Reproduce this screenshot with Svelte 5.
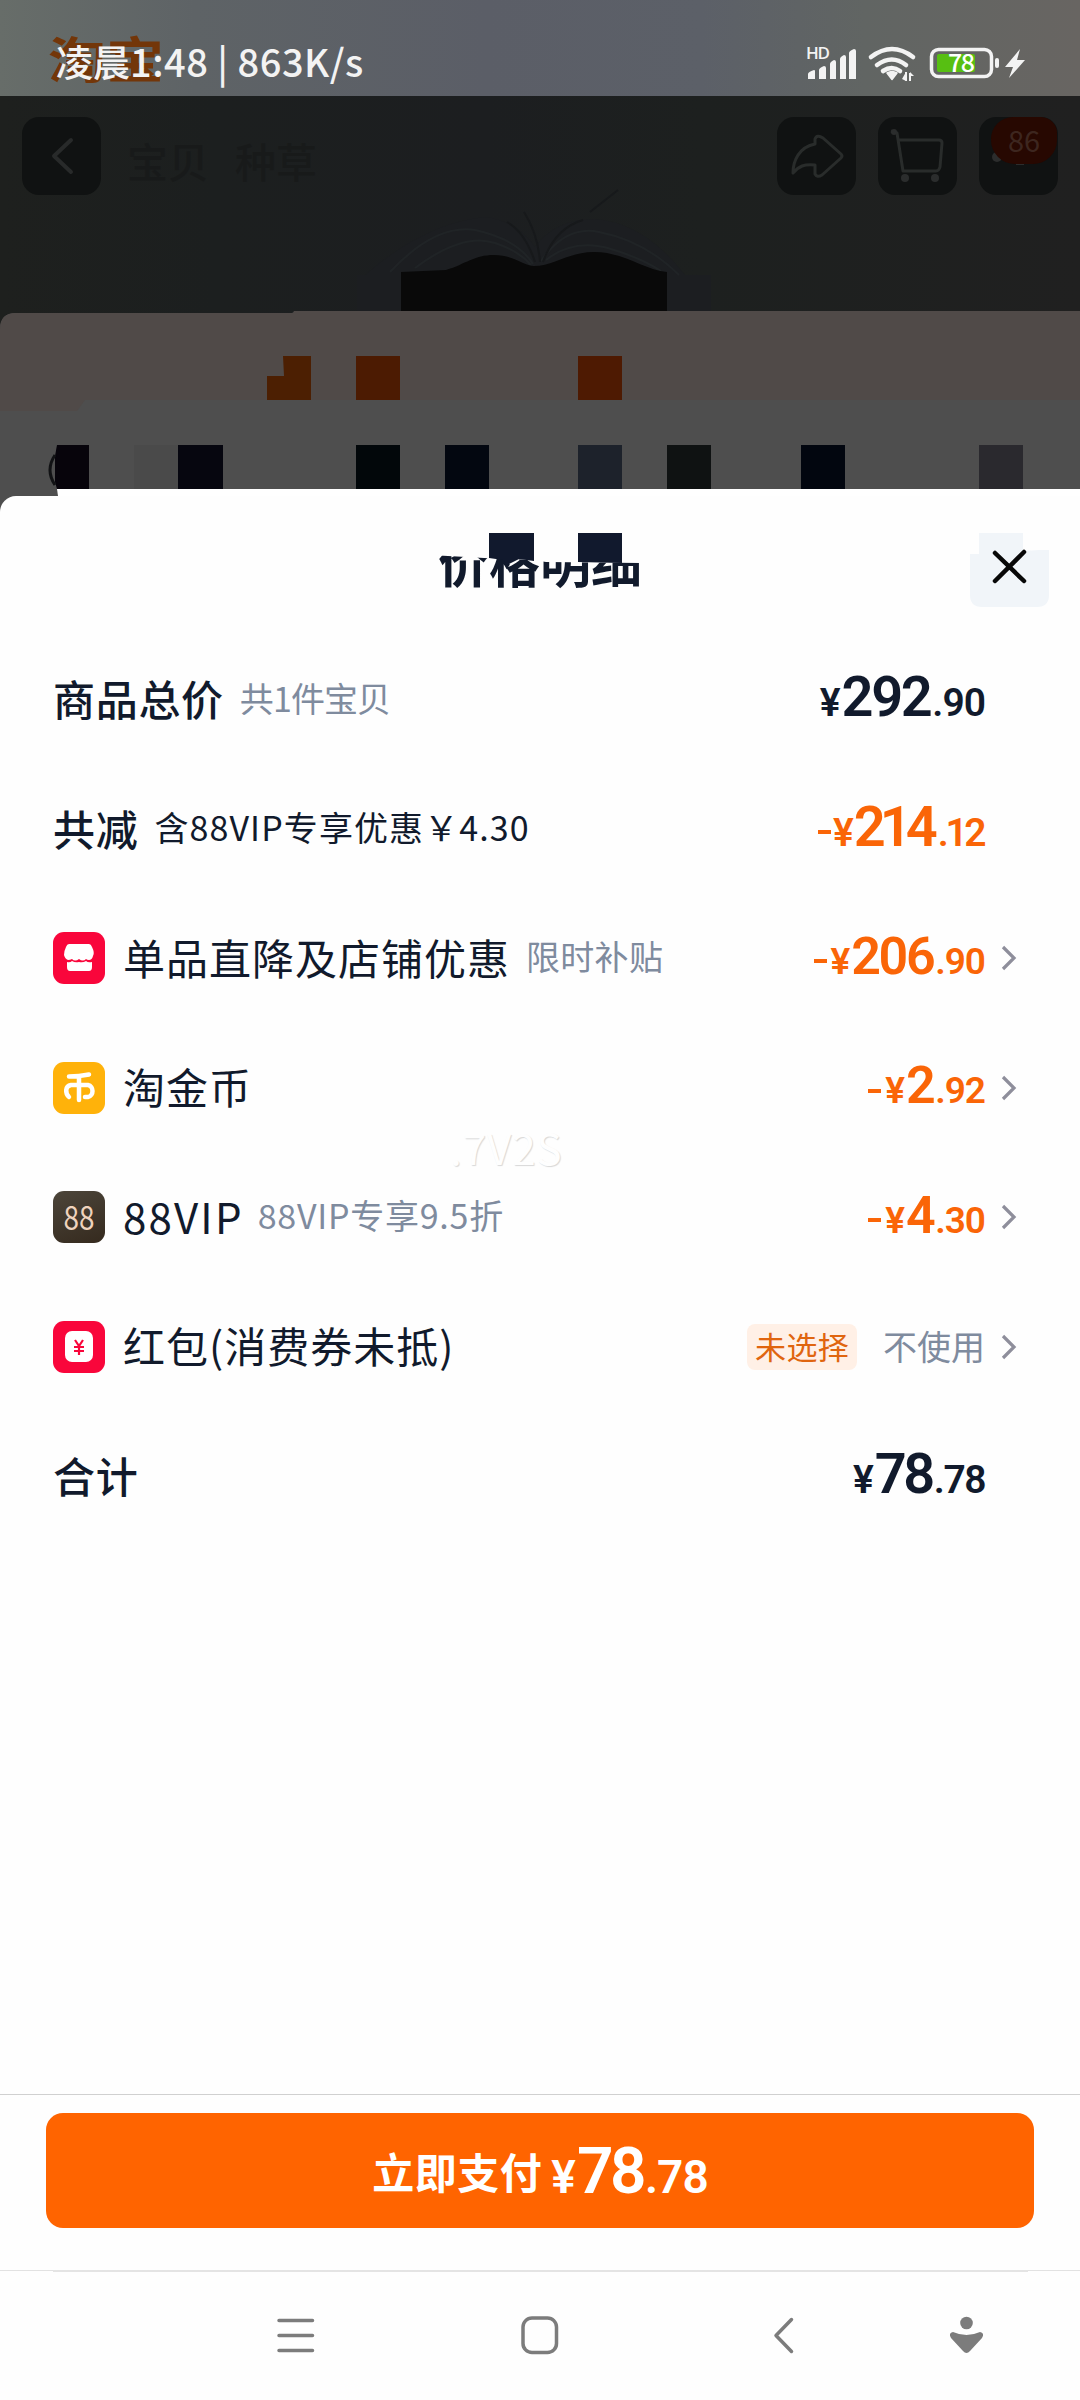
<script>
  const rows = [
    { label: "商品总价", strong: true, note: "共1件宝贝", noteGap: -0.9, sign: "", int: "292", dec: ".90", size: "big" },
    { label: "共减", strong: true, note: "含88VIP专享优惠￥4.30", noteGap: 1.1, darkNote: true, sign: "-", int: "214", dec: ".12", size: "big", tight: true, orange: true },
    { icon: "shop", label: "单品直降及店铺优惠", note: "限时补贴", noteGap: 0.3, sign: "-", int: "206", dec: ".90", orange: true, arrow: true },
    { icon: "coin", label: "淘金币", sign: "-", int: "2", dec: ".92", orange: true, arrow: true },
    { icon: "vip", label: "88VIP", latin: true, note: "88VIP专享9.5折", noteGap: 0.75, sign: "-", int: "4", dec: ".30", orange: true, arrow: true },
    { icon: "packet", label: "红包(消费券未抵)", tag: "未选择", value: "不使用", arrow: true },
    { label: "合计", strong: true, sign: "", int: "78", dec: ".78", size: "big", narrow: true },
  ];

  // leftover blocks of the page behind the sheet: x, y, width, colour
  const blocks = [
    [356, 356, 44, "#4c1b02"],
    [578, 356, 44, "#4e1a02"],
    [134, 445, 44, "#4a4a4a"],
    [178, 445, 45, "#06060f"],
    [356, 445, 44, "#02070a"],
    [445, 445, 44, "#030710"],
    [578, 445, 44, "#1d222b"],
    [667, 445, 44, "#0f1212"],
    [801, 445, 44, "#02060f"],
    [979, 445, 44, "#2a292e"],
  ];
</script>

<div class="screen">
  <header class="status">
    <span class="brand">淘宝</span>
    <span class="time">凌晨<b>1:48&nbsp;|&nbsp;863K/s</b></span>
    <svg class="status-icons" width="222" height="40" viewBox="805 44 222 40">
      <text x="806" y="59" class="hd" textLength="24">HD</text>
      <g fill="#f3f3f3">
        <path d="M808 79v-5q0-2 6-4q1 0 1 1v8zM819 79v-9q0-2 5-4q2 0 2 2v11zM830 79v-15q0-2 4-4q2 0 2 2v17zM840 79v-20q0-2 4-4q2 0 2 2v22zM849 79v-26q0-2 5-4q2 0 2 2v28z" />
        <path d="M887 73q5-3 10 0l-5 6.500z" stroke="#f3f3f3" stroke-width="1.500" stroke-linejoin="round" />
        <path d="M902 79l4-7v9zM905 72h2v9h-2zM909 73h2v8h-2zM910 72l4 4h-4z" />
        <rect x="995" y="58" width="4" height="10" rx="2" />
        <path d="M1020 49l-15 18h8l-4 11 16-18h-8z" />
      </g>
      <g fill="none" stroke="#f3f3f3" stroke-width="4.600" stroke-linecap="round">
        <path d="M871 57q21-16 42 0M877 65q15-11 29 0M883 71q9-6 17 0" />
      </g>
      <rect x="931.500" y="49.500" width="60" height="27" rx="7" fill="none" stroke="#f3f3f3" stroke-width="3.500" />
      <rect x="937" y="54" width="38" height="18" rx="2" fill="#57bf12" />
      <text x="948" y="72" class="charge" textLength="27">78</text>
    </svg>
  </header>

  <div class="behind">
    <svg class="backdrop" width="1080" height="400" viewBox="0 96 1080 400">
      <g fill="#1c1e21">
        <rect x="357" y="275" width="44" height="38" />
        <rect x="667" y="275" width="44" height="38" />
        <path d="M365 275q60-52 120-58q32 4 50 30q20-28 60-28q50 4 90 56v8H365z" />
      </g>
      <g fill="none" stroke="#222528" stroke-width="2" opacity=".8">
        <path d="M390 272q45-48 85-42q42 9 58 34M415 268q48-36 80-25q24 8 36 22M541 261q25-36 58-29q46 9 80 43M546 260q28-22 65-11q30 9 50 22" />
      </g>
      <path d="M535 262q-10-30-28-40M540 262q-2-28-16-50M543 262q12-34 40-42M590 212l28-22" fill="none" stroke="#17191b" stroke-width="2" />
      <path d="M401 272l45-2c20-6 28-15 48-15c20 0 30 11 40 11c20 0 34-14 60-14c30 0 50 18 73 20v40H401z" fill="#090909" />
      <path d="M0 329q0-16 16-16h276q2 0 2-2h786v185H0z" fill="#4e4e4e" />
      <path d="M0 329q0-16 16-16h276q2 0 2-2h786v89H85l-8 11H0z" fill="#504a48" />
      <path d="M283 356h28v44h-44v-24h17z" fill="#4c1f02" />
      {#each blocks as [x, y, w, fill]}
        <rect {x} {y} width={w} height="44" {fill} />
      {/each}
      <path d="M57 445h32v44H57l-2-7v-26z" fill="#07040b" />
      <path d="M55 455q-10 15 0 30" fill="none" stroke="#111214" stroke-width="3" />
      <path d="M58 496l-1-7h1023v7z" fill="#fff" />
    </svg>
    <div class="toolbar">
      <span class="tile">
        <svg width="79" height="78" viewBox="22 117 79 78"><path d="M71 140l-17 16 17 16" fill="none" stroke="#282a2a" stroke-width="4" stroke-linecap="round" stroke-linejoin="round" /></svg>
      </span>
      <span class="tab">宝贝</span>
      <span class="tab">种草</span>
      <span class="tile push">
        <svg width="79" height="78" viewBox="777 117 79 78"><path d="M793 173c0-12 6-26 22-29v-5q2-5 8-1l18 16q2 2 0 4l-19 17q-5 3-7-1v-9c-11-1-16 1-22 8z" fill="none" stroke="#292c2b" stroke-width="3" stroke-linejoin="round" /></svg>
      </span>
      <span class="tile">
        <svg width="79" height="78" viewBox="878 117 79 78"><g fill="none" stroke="#292c2b" stroke-width="3" stroke-linejoin="round"><path d="M891 131l6 2 6 38h33q3 0 4-4l2-24q0-3-3-3h-40" /></g><g fill="#2b2d2d"><circle cx="905" cy="178" r="4" /><circle cx="935" cy="178" r="4" /><circle cx="894" cy="132" r="3" /></g></svg>
      </span>
      <span class="tile">
        <svg width="79" height="78" viewBox="979 117 79 78"><circle cx="997" cy="157" r="5" fill="#2c2d2d" /><path d="M1016 164h8" stroke="#2c2d2d" stroke-width="2" /></svg>
        <em class="count">86</em>
      </span>
    </div>
  </div>

  <section class="sheet">
    <div class="title">
      <h1>价格明细</h1>
      <svg class="title-cover" width="240" height="50" viewBox="430 518 240 50">
        <path d="M430 518h240v46l-30-1-94-1-12-2-50-2-54-3z" fill="#fefefe" />
        <path d="M489 533h45v28l-15-2-12 6-4-5-14-2zM578 533h44v30l-44-1z" fill="#11192d" />
      </svg>
      <svg class="close" width="79" height="74" viewBox="970 533 79 74">
        <path d="M979 533h44v18l16-1h10v45q0 12-12 12h-55q-12 0-12-12v-41h9z" fill="#f1f5f9" />
        <path d="M995 553l29 28M1024 552l-29 29" stroke="#080808" stroke-width="4.500" stroke-linecap="round" />
      </svg>
    </div>

    <div class="list">
      {#each rows as row}
        <div class="row">
          {#if row.icon}
            <span class="icon {row.icon}">
              {#if row.icon === "shop"}
                <svg width="52" height="52" viewBox="0 0 52 52"><path d="M16 12h20q2 0 3 3q3 6 1 9q-1 4-4 4q-2 0-3-1q-3 3-7 0q-4 3-7 0q-2 1-4 1q-3-1-4-5q0-4 2-8q1-3 3-3z" fill="#fff" /><path d="M14 30q3 1 5-1q3 2 7 1q4 1 7-1q2 2 6 1v5q0 4-3 4H17q-3 0-3-4z" fill="#fff" /></svg>
              {:else if row.icon === "coin"}
                <svg width="52" height="52" viewBox="0 0 52 52"><g fill="none" stroke="#fff" stroke-width="4.500" stroke-linecap="round" stroke-linejoin="round"><path d="M16 14.500q10 0 20-2M26 14v24M16 35c-4-4-4-11 2-12h17c6 1 6 11 0 12h-3" /></g></svg>
              {:else if row.icon === "vip"}
                <span class="eights">88</span>
              {:else}
                <svg width="52" height="52" viewBox="0 0 52 52"><rect x="12" y="10" width="28" height="31" rx="7" fill="#fff" /><path d="M22 19l4 6 4-6M21 26h10M21 30h10M26 25v9" fill="none" stroke="#f9063b" stroke-width="2.200" /></svg>
              {/if}
            </span>
          {/if}
          <span class="label" class:strong={row.strong} class:latin={row.latin}>{row.label}</span>
          {#if row.note}
            <span class="note" class:dark={row.darkNote} style="letter-spacing: {row.noteGap}px">{row.note}</span>
          {/if}
          <div class="right">
            {#if row.tag}
              <span class="tag">{row.tag}</span>
              <span class="value">{row.value}</span>
            {:else}
              <span class="price" class:big={row.size === "big"} class:orange={row.orange} class:tight={row.tight} class:narrow={row.narrow}>
                {#if row.sign}<i class="minus"></i>{/if}<small>¥</small><strong>{row.int}</strong><small class="dec">{row.dec}</small>
              </span>
            {/if}
          </div>
          <span class="arrow">
            {#if row.arrow}
              <svg width="18" height="28" viewBox="0 0 18 28"><path d="M3 3l11 11L3 25" fill="none" stroke="#8e8e9b" stroke-width="3.200" /></svg>
            {/if}
          </span>
        </div>
      {/each}
      <span class="ghost">.7V2S</span>
    </div>
  </section>

  <footer class="pay">
    <button>
      <span>立即支付</span>
      <span class="price paid"><small>¥</small><strong>78</strong><small class="dec">.78</small></span>
    </button>
  </footer>

  <nav>
    <svg width="1080" height="130" viewBox="0 2270 1080 130">
      <path d="M0 2270.500h1080" stroke="#e2e2e2" />
      <path d="M53 2271h975" stroke="#e4e4e4" stroke-width="2" />
      <g fill="none" stroke="#7c7c7c" stroke-width="3.500" stroke-linecap="round" stroke-linejoin="round">
        <path d="M279 2320.500h33.500M279 2335.500h33.500M279 2350.500h33.500" />
        <rect x="523" y="2318" width="33.500" height="34.500" rx="9" />
        <path d="M791.500 2319.500l-15.500 16 15.500 16" />
      </g>
      <circle cx="966.500" cy="2323" r="6.300" fill="#7c7c7c" />
      <path d="M953 2332q13.500 6 27 0q5 1 2 6l-12 13q-3.500 4-7 0l-12-13q-3-5 2-6z" fill="#7c7c7c" />
    </svg>
  </nav>
</div>

<style>
  :global(body) {
    margin: 0;
    background: #fefefe;
  }
  .screen {
    width: 1080px;
    height: 2400px;
    display: flex;
    flex-direction: column;
    overflow: hidden;
    color: #111a2c;
    background: #4e4e4e;
    font-family: "Noto Sans CJK SC", sans-serif;
  }
  svg {
    display: block;
  }
  .status {
    position: relative;
    box-sizing: border-box;
    height: 96px;
    padding: 14px 53px 0 56px;
    display: flex;
    align-items: center;
    justify-content: space-between;
    background: linear-gradient(90deg, #676d69 0, #5e6366 18%, #5b5e67 45%, #5c6068 65%, #616563 80%, #686562 100%);
  }
  .brand {
    position: absolute;
    left: 48px;
    top: 30px;
    font-size: 58px;
    line-height: 54px;
    font-weight: 700;
    color: #733609;
    transform: scaleY(0.85);
  }
  .time {
    position: relative;
    top: 6px;
    font-size: 37px;
    line-height: 50px;
    font-weight: 500;
    color: #f3f3f3;
    white-space: nowrap;
  }
  .time b {
    font-size: 38px;
    font-weight: 500;
    letter-spacing: 0.5px;
  }
  .status-icons {
    margin-top: 18px;
    overflow: visible;
  }
  .hd {
    font: 600 17px "Open Sans", sans-serif;
    fill: #f3f3f3;
  }
  .charge {
    font: 500 25px "Noto Sans CJK SC", sans-serif;
    fill: #fff;
  }
  .behind {
    position: relative;
    height: 400px;
    background: linear-gradient(90deg, #1e201e 0, #1c1f1f 20%, #1c1e20 45%, #1d201f 65%, #202020 100%);
  }
  .backdrop {
    position: absolute;
    left: 0;
    top: 0;
  }
  .toolbar {
    position: relative;
    display: flex;
    gap: 22px;
    padding: 21px 22px 0;
  }
  .tile {
    position: relative;
    width: 79px;
    height: 78px;
    border-radius: 17px;
    background: #101212;
    overflow: hidden;
  }
  .push {
    margin-left: auto;
  }
  .tab {
    margin: 10px 0 0 4px;
    font-size: 41px;
    line-height: 66px;
    font-weight: 500;
    color: #181a1a;
  }
  .count {
    position: absolute;
    top: 0;
    left: 12px;
    width: 66px;
    height: 47px;
    border-radius: 22px 16px 24px 24px;
    background: #270801;
    color: #3d261f;
    font-size: 29px;
    line-height: 45px;
    font-style: normal;
    text-align: center;
  }
  .sheet {
    height: 1598px;
    border-top-left-radius: 16px;
    background: #fefefe;
  }
  .title {
    position: relative;
    height: 139px;
    text-align: center;
  }
  h1 {
    margin: 0;
    padding-top: 25px;
    font-size: 51px;
    line-height: 80px;
    font-weight: 700;
  }
  .title-cover {
    position: absolute;
    left: 430px;
    top: 22px;
  }
  .close {
    position: absolute;
    left: 970px;
    top: 37px;
  }
  .list {
    position: relative;
  }
  .row {
    display: flex;
    align-items: center;
    height: 129.400px;
    padding: 0 62px 0 53px;
    white-space: nowrap;
  }
  .icon {
    width: 52px;
    height: 52px;
    margin-right: 18px;
    border-radius: 11px;
    background: #f9063b;
  }
  .coin {
    background: #ffb20a;
  }
  .vip {
    background: linear-gradient(160deg, #4c453a, #352a1e);
    color: #efd3bd;
    text-align: center;
  }
  .eights {
    display: block;
    font-size: 34px;
    line-height: 50px;
    transform: scaleX(0.82);
  }
  .label {
    padding-bottom: 3px;
    font-size: 42px;
    line-height: 60px;
    letter-spacing: 1px;
  }
  .latin {
    letter-spacing: 2.200px;
  }
  .strong {
    font-weight: 500;
    letter-spacing: 0.700px;
  }
  .note {
    margin-left: 16px;
    padding-bottom: 4px;
    font-size: 34px;
    line-height: 50px;
    color: #7f8b9e;
  }
  .latin + .note {
    margin-left: 14px;
  }
  .note.dark {
    color: #111a2c;
  }
  .right {
    margin-left: auto;
    display: flex;
    align-items: center;
  }
  .tag {
    margin-right: 26px;
    padding: 0 8px 2px;
    border-radius: 8px;
    background: #fff0e6;
    color: #e0650f;
    font-size: 31px;
    line-height: 44px;
    letter-spacing: 0.300px;
  }
  .value {
    padding-bottom: 3px;
    font-size: 34px;
    color: #7f8b9e;
  }
  .arrow {
    width: 18px;
    margin-left: 15px;
  }
  .price {
    display: flex;
    align-items: baseline;
    padding-top: 2px;
    font-family: Roboto, sans-serif;
    font-weight: 600;
    line-height: 60px;
  }
  .price strong {
    font-size: 52px;
    font-weight: 600;
    margin-left: 2px;
    letter-spacing: -2.400px;
  }
  .price small {
    font-size: 37px;
    letter-spacing: -1px;
  }
  .price .dec {
    margin-left: 2px;
  }
  .price.big {
    padding-top: 0;
  }
  .price.big strong {
    font-size: 56px;
  }
  .price.big small {
    font-size: 39px;
  }
  .price.tight {
    padding-top: 2px;
  }
  .price.tight strong {
    letter-spacing: -6px;
    margin-left: 1px;
    margin-right: 4px;
  }
  .price.tight .dec {
    letter-spacing: -3.500px;
    margin-right: 2px;
  }
  .price.tight .minus {
    margin-right: 2px;
  }
  .price.narrow {
    padding-top: 2px;
  }
  .price.narrow strong {
    letter-spacing: -3.500px;
  }
  .price.narrow .dec {
    letter-spacing: -1.500px;
  }
  .orange {
    color: #fa6507;
  }
  .minus {
    align-self: center;
    width: 13px;
    height: 4px;
    margin: 4px 4px 0 0;
    background: currentColor;
  }
  .ghost {
    position: absolute;
    left: 450px;
    top: 487px;
    font-size: 42px;
    line-height: 50px;
    letter-spacing: 1px;
    color: #fefefe;
    text-shadow: 1px 1px 1px #d8d8d8;
  }
  .pay {
    box-sizing: border-box;
    height: 176px;
    padding: 18px 46px 0;
    border-top: 1px solid #d0d0d0;
    background: #fefefe;
  }
  button {
    display: flex;
    align-items: center;
    justify-content: center;
    width: 988px;
    height: 115px;
    padding: 0;
    border: 0;
    border-radius: 17px;
    background: #ff6400;
    color: #fff;
    font: 700 42px "Noto Sans CJK SC", sans-serif;
    letter-spacing: 0.500px;
  }
  .paid {
    margin-left: 9px;
    padding-top: 7px;
  }
  .price.paid strong {
    font-size: 64px;
    letter-spacing: -3.500px;
  }
  .price.paid small {
    font-size: 46px;
  }
  nav {
    background: #fefefe;
  }
</style>
